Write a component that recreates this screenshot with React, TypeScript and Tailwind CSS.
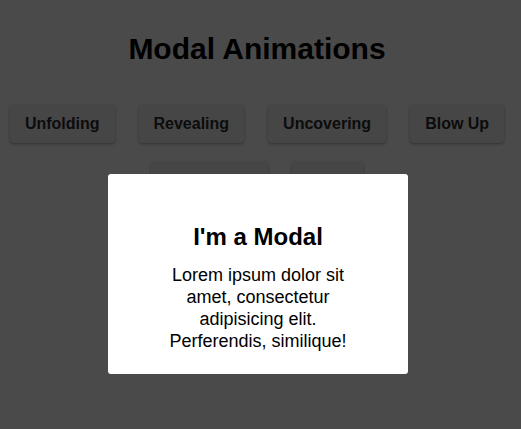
const buttons = ['Unfolding', 'Revealing', 'Uncovering', 'Blow Up', 'Meep Meep', 'Bond']

export default function App() {
  return (
    <div className="relative h-[429px] w-[521px] overflow-hidden bg-[#f7f7f7] font-['Liberation_Sans',Arial,sans-serif]">
      <div className="flex w-[514px] flex-col items-center pt-[31px]">
        <h1 className="text-[30px] font-bold leading-[36px] text-black">Modal Animations</h1>
        <div className="mt-[38px] flex w-full flex-wrap justify-center gap-x-[24px] gap-y-[19px]">
          {buttons.map((b) => (
            <button
              key={b}
              type="button"
              className="h-[38px] rounded-[4px] bg-[#ececec] px-[15px] text-base font-bold text-[#2b2b2b] shadow-[0_1px_3px_rgba(0,0,0,0.35)]"
            >
              {b}
            </button>
          ))}
        </div>
      </div>

      <div className="absolute inset-0 bg-black/70" />

      <div className="absolute left-[108px] top-[174px] flex h-[200px] w-[300px] flex-col items-center rounded-[3px] bg-white pt-[49px] text-black">
        <h2 className="text-2xl font-bold leading-[28px]">I'm a Modal</h2>
        <p className="mt-[13px] w-[200px] text-center text-[18px] leading-[22px]">
          Lorem ipsum dolor sit amet, consectetur adipisicing elit. Perferendis, similique!
        </p>
      </div>
    </div>
  )
}
